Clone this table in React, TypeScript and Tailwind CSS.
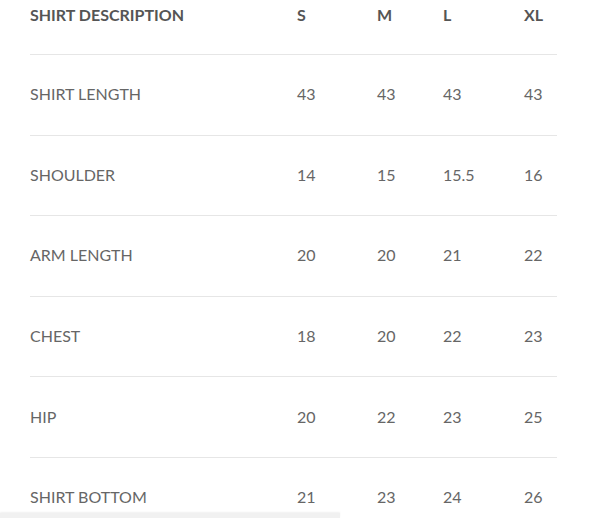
const SIZES = ['S', 'M', 'L', 'XL'];

const ROWS: { label: string; values: string[] }[] = [
  { label: 'SHIRT LENGTH', values: ['43', '43', '43', '43'] },
  { label: 'SHOULDER', values: ['14', '15', '15.5', '16'] },
  { label: 'ARM LENGTH', values: ['20', '20', '21', '22'] },
  { label: 'CHEST', values: ['18', '20', '22', '23'] },
  { label: 'HIP', values: ['20', '22', '23', '25'] },
  { label: 'SHIRT BOTTOM', values: ['21', '23', '24', '26'] },
];

const cols = 'grid grid-cols-[267px_80px_66px_81px_1fr] items-center';

export default function App() {
  return (
    <div className="relative h-[518px] w-[600px] overflow-hidden bg-white font-['Lato','Liberation_Sans',sans-serif] text-[16px]">
      <div className="ml-[30px] w-[527px]">
        <div className={`${cols} h-[54px] pt-[6px] pb-[30px] font-bold leading-[18px] text-[#555]`}>
          <div>SHIRT DESCRIPTION</div>
          {SIZES.map((s) => (
            <div key={s}>{s}</div>
          ))}
        </div>
        {ROWS.map((row) => (
          <div
            key={row.label}
            className={`${cols} h-[80.6px] border-t border-[#e6e6e6] pb-[1px] leading-[18px] text-[#666]`}
          >
            <div>{row.label}</div>
            {row.values.map((v, i) => (
              <div key={i}>{v}</div>
            ))}
          </div>
        ))}
      </div>
      <div className="absolute bottom-0 left-0 h-[5px] w-[340px] bg-[#f1f1f1] shadow-[0_-1px_2px_rgba(0,0,0,0.06)]" />
    </div>
  );
}
